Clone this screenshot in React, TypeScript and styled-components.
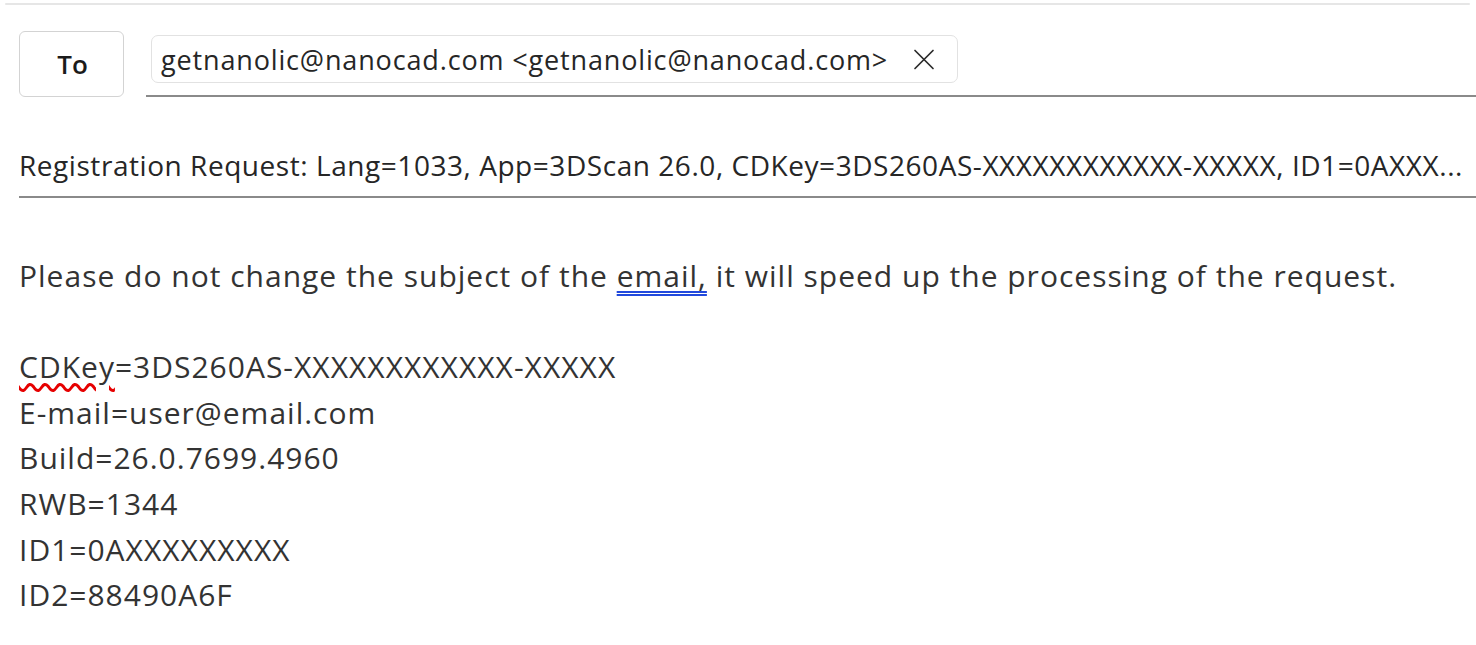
import React from "react";
import styled, { createGlobalStyle } from "styled-components";

const GlobalStyle = createGlobalStyle`
  html, body {
    margin: 0;
    padding: 0;
    background: #ffffff;
  }
  body {
    font-family: "Open Sans", "Noto Sans", "Liberation Sans", sans-serif;
    color: #333333;
  }
`;

const Page = styled.div`
  width: 1476px;
  height: 645px;
  overflow: hidden;
  padding-top: 3px;
  box-sizing: border-box;
`;

const TopRule = styled.div`
  height: 2px;
  margin: 0 6px 0 5px;
  background: #e6e6e6;
  border-radius: 1px;
`;

const Header = styled.div`
  display: flex;
  flex-direction: column;
  padding: 26px 0 0 19px;
`;

const ToRow = styled.div`
  display: flex;
  align-items: stretch;
  gap: 22px;
`;

const ToButton = styled.button`
  flex: none;
  width: 105px;
  height: 66px;
  box-sizing: border-box;
  border: 1px solid #d3d3d3;
  border-radius: 6px;
  background: #ffffff;
  font-family: "Open Sans", "Noto Sans", sans-serif;
  font-weight: 600;
  font-size: 26px;
  color: #1b1b1b;
  padding: 0 0 0 2px;
`;

const RecipientField = styled.div`
  flex: 1;
  display: flex;
  align-items: flex-start;
  padding: 4px 0 0 5px;
  border-bottom: 2px solid #8a8a8a;
`;

const Chip = styled.div`
  display: flex;
  align-items: center;
  height: 48px;
  box-sizing: border-box;
  padding: 0 22px 0 9px;
  gap: 25px;
  border: 1px solid #e2e2e2;
  border-radius: 7px;
  font-size: 27px;
  color: #262626;
  white-space: nowrap;
`;

const ChipText = styled.span`
  letter-spacing: 0.85px;
`;

const RemoveIcon = styled.svg`
  flex: none;
  width: 22px;
  height: 21px;
`;

const SubjectField = styled.div`
  display: flex;
  align-items: flex-end;
  height: 101px;
  box-sizing: border-box;
  padding-bottom: 12px;
  border-bottom: 2px solid #8a8a8a;
`;

const SubjectText = styled.span`
  font-size: 28px;
  color: #262626;
  white-space: nowrap;
  overflow: hidden;
  letter-spacing: 0.55px;
`;

const Body = styled.div`
  padding: 55px 0 0 19px;
  font-size: 30px;
  line-height: 45.6px;
  letter-spacing: 1px;
  color: #333333;
`;

const Line = styled.div<{ $gapBefore?: boolean }>`
  margin-top: ${(p) => (p.$gapBefore ? "45.6px" : "0")};
  white-space: nowrap;
`;

const GrammarMark = styled.span`
  text-decoration: underline double #2149dc;
  text-decoration-thickness: 2px;
  text-underline-offset: 4px;
`;

const SpellMark = styled.span`
  text-decoration: underline wavy #e60000;
  text-decoration-thickness: 2.5px;
  text-underline-offset: 5px;
`;

export default function App() {
  const details = [
    "E-mail=user@email.com",
    "Build=26.0.7699.4960",
    "RWB=1344",
    "ID1=0AXXXXXXXXX",
    "ID2=88490A6F",
  ];
  return (
    <>
      <GlobalStyle />
      <Page>
        <TopRule />
        <Header>
          <ToRow>
            <ToButton>To</ToButton>
            <RecipientField>
              <Chip>
                <ChipText>getnanolic@nanocad.com &lt;getnanolic@nanocad.com&gt;</ChipText>
                <RemoveIcon viewBox="0 0 22 21" fill="none">
                  <path d="M2 1.5 L20 19.5 M20 1.5 L2 19.5" stroke="#2a2a2a" strokeWidth="1.7" strokeLinecap="round" />
                </RemoveIcon>
              </Chip>
            </RecipientField>
          </ToRow>
          <SubjectField>
            <SubjectText>
              Registration Request: Lang=1033, App=3DScan 26.0, CDKey=3DS260AS-XXXXXXXXXXXX-XXXXX, ID1=0AXXX...
            </SubjectText>
          </SubjectField>
        </Header>
        <Body>
          <Line>
            Please do not change the subject of the <GrammarMark>email,</GrammarMark> it will speed up the processing of the request.
          </Line>
          <Line $gapBefore>
            <SpellMark>CDKey</SpellMark>=3DS260AS-XXXXXXXXXXXX-XXXXX
          </Line>
          {details.map((d) => (
            <Line key={d}>{d}</Line>
          ))}
        </Body>
      </Page>
    </>
  );
}
